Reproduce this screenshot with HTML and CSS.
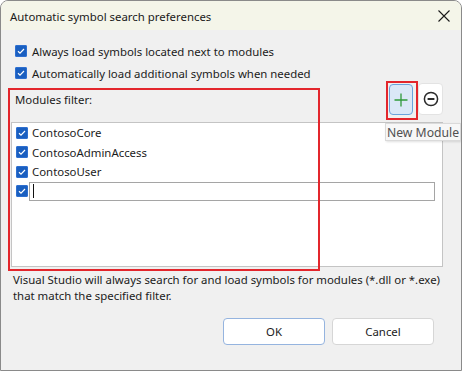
FILE: index.html
```html
<!DOCTYPE html>
<html>
<head>
<meta charset="utf-8">
<link rel="stylesheet" href="styles.css">
</head>
<body>
<div class="window">
  <div class="titlebar">
    <span class="title">Automatic symbol search preferences</span>
    <svg class="close" width="12" height="12" viewBox="0 0 12 12"><path d="M0.5 0.5 L11.5 11.5 M11.5 0.5 L0.5 11.5" stroke="#1a1a1a" stroke-width="1.1" fill="none"/></svg>
  </div>
  <div class="content">
    <div class="option">
      <span class="cb"><svg width="12" height="12" viewBox="0 0 12 12"><path d="M3 6.2 L5 8.1 L9 4" stroke="#fff" stroke-width="1.2" fill="none"/></svg></span>
      <span>Always load symbols located next to modules</span>
    </div>
    <div class="option">
      <span class="cb"><svg width="12" height="12" viewBox="0 0 12 12"><path d="M3 6.2 L5 8.1 L9 4" stroke="#fff" stroke-width="1.2" fill="none"/></svg></span>
      <span>Automatically load additional symbols when needed</span>
    </div>
    <div class="filter">
      <div class="highlight hl-filter"></div>
      <div class="filter-head">
        <span class="label">Modules filter:</span>
        <div class="tools">
          <button class="tool add">
            <svg width="14" height="14" viewBox="0 0 14 14"><path d="M7 0.5 V13.5 M0.5 7 H13.5" stroke="#2f9a3a" stroke-width="1.3" fill="none"/></svg>
            <span class="highlight hl-add"></span>
            <span class="tooltip">New Module</span>
          </button>
          <button class="tool remove">
            <svg width="16" height="16" viewBox="0 0 16 16"><circle cx="8" cy="8" r="6.6" stroke="#2b2b2b" stroke-width="1.5" fill="none"/><path d="M4.6 8 H11.4" stroke="#2b2b2b" stroke-width="2.2"/></svg>
          </button>
        </div>
      </div>
      <div class="list">
        <div class="item">
          <span class="cb"><svg width="12" height="12" viewBox="0 0 12 12"><path d="M3 6.2 L5 8.1 L9 4" stroke="#fff" stroke-width="1.2" fill="none"/></svg></span>
          <span>ContosoCore</span>
        </div>
        <div class="item">
          <span class="cb"><svg width="12" height="12" viewBox="0 0 12 12"><path d="M3 6.2 L5 8.1 L9 4" stroke="#fff" stroke-width="1.2" fill="none"/></svg></span>
          <span>ContosoAdminAccess</span>
        </div>
        <div class="item">
          <span class="cb"><svg width="12" height="12" viewBox="0 0 12 12"><path d="M3 6.2 L5 8.1 L9 4" stroke="#fff" stroke-width="1.2" fill="none"/></svg></span>
          <span>ContosoUser</span>
        </div>
        <div class="item edit">
          <span class="cb"><svg width="12" height="12" viewBox="0 0 12 12"><path d="M3 6.2 L5 8.1 L9 4" stroke="#fff" stroke-width="1.2" fill="none"/></svg></span>
          <span class="textbox"><span class="caret"></span></span>
        </div>
      </div>
      <p class="desc">Visual Studio will always search for and load symbols for modules (*.dll or *.exe)<br>that match the specified filter.</p>
    </div>
    <div class="actions">
      <button class="btn default">OK</button>
      <button class="btn">Cancel</button>
    </div>
  </div>
</div>
</body>
</html>
```

FILE: styles.css
```css
* { box-sizing: border-box; }
html, body { margin: 0; padding: 0; background: #ffffff; }
body {
  font-family: "Noto Sans", "Open Sans", sans-serif;
  font-size: 11.4px;
  color: #1b1b1b;
}
.window {
  width: 462px;
  height: 371px;
  border: 1px solid #8a8a8a;
  border-radius: 8px 8px 0 0;
  background: #f0f0f0;
  overflow: hidden;
  display: flex;
  flex-direction: column;
}
.titlebar {
  height: 29px;
  background: #f4f5e9;
  display: flex;
  align-items: center;
  justify-content: space-between;
  padding: 0 11px 0 9px;
  flex: none;
}
.title { font-size: 11.4px; color: #1a1a1a; padding-top: 1px; }
.close { display: block; }
.content {
  flex: 1;
  padding: 10px 18px 0 10px;
  display: flex;
  flex-direction: column;
}
.option {
  height: 22px;
  display: flex;
  align-items: center;
  gap: 5px;
  padding-left: 4px;
}
.cb {
  width: 12px;
  height: 12px;
  border-radius: 2px;
  background: #1a5fc0;
  box-shadow: inset 0 0 0 1px #2e6fd0;
  display: block;
  flex: none;
}
.cb svg { display: block; }
.filter { position: relative; }
.highlight {
  position: absolute;
  border: 2px solid #e3262c;
  pointer-events: none;
}
.hl-filter { left: -3px; top: 4px; width: 312px; height: 183px; }
.filter-head {
  height: 31px;
  display: flex;
  align-items: center;
  justify-content: space-between;
  padding-left: 4px;
}
.label { padding-bottom: 1px; }
.tools { display: flex; gap: 5px; }
.tool {
  width: 25px;
  height: 31px;
  border: 1px solid #e3e3e3;
  border-radius: 4px;
  background: #ffffff;
  padding: 0;
  display: flex;
  align-items: center;
  justify-content: center;
  position: relative;
}
.tool.add {
  width: 24px;
  background: #dae8f7;
  border-color: #6aa3dc;
}
.tool.remove { width: 25px; margin-top: -1px; height: 32px; }
.hl-add { left: -4px; top: -4px; width: 32px; height: 39px; }
.tooltip {
  position: absolute;
  left: -5px;
  top: 38px;
  width: 76px;
  height: 18px;
  background: #f7f7f7;
  border: 1px solid #dadada;
  box-shadow: 1px 1px 2px rgba(0,0,0,0.12);
  font-family: "Noto Sans", sans-serif;
  font-size: 12.2px;
  color: #505050;
  display: flex;
  align-items: center;
  justify-content: center;
  white-space: nowrap;
  z-index: 2;
}
.list {
  margin-top: 7px;
  height: 145px;
  background: #ffffff;
  border: 1px solid #c4c4c4;
  padding: 0 7px 0 4px;
}
.item {
  height: 19.5px;
  display: flex;
  align-items: center;
  gap: 4px;
}
.item.edit { gap: 1px; }
.textbox {
  flex: 1;
  height: 19px;
  border: 1px solid #a5a5a5;
  background: #fff;
  display: flex;
  align-items: center;
  padding-left: 3px;
}
.caret { width: 1px; height: 14px; background: #111; }
.desc {
  margin: 5px 0 0 2px;
  line-height: 16px;
}
.actions {
  margin-top: 14px;
  display: flex;
  justify-content: flex-end;
  gap: 7px;
  padding-right: 9px;
}
.btn {
  width: 102px;
  height: 27px;
  background: #ffffff;
  border: 1px solid #d6d6d6;
  border-radius: 4px;
  font-family: "Noto Sans", sans-serif;
  font-size: 11.4px;
  color: #1b1b1b;
  padding: 0;
}
.btn.default { border-color: #95b4df; }
```
